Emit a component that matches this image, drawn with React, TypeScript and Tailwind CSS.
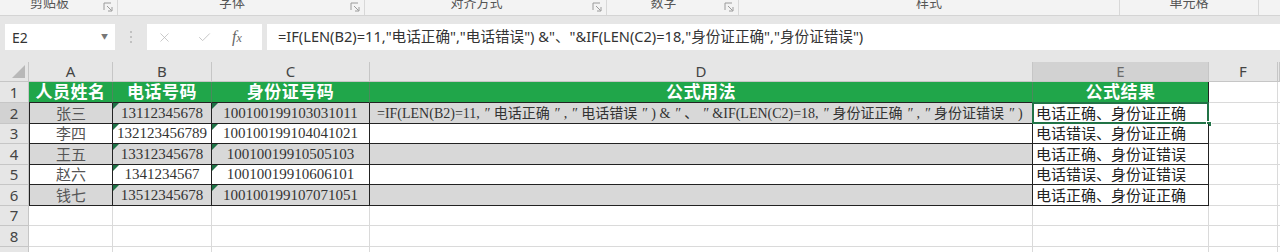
import React from "react";
import { X, Check } from "lucide-react";

const groups = [
  { label: "剪贴板", w: "w-[118px]", launcher: true },
  { label: "字体", w: "w-[247px]", launcher: true },
  { label: "对齐方式", w: "w-[242px]", launcher: true },
  { label: "数字", w: "w-[132px]", launcher: true },
  { label: "样式", w: "w-[381px]", launcher: false },
  { label: "单元格", w: "w-[139px]", launcher: false },
];

const people = [
  ["张三", "13112345678", "100100199103031011", "电话正确、身份证正确"],
  ["李四", "132123456789", "100100199104041021", "电话错误、身份证正确"],
  ["王五", "13312345678", "10010019910505103", "电话正确、身份证错误"],
  ["赵六", "1341234567", "10010019910606101", "电话错误、身份证错误"],
  ["钱七", "13512345678", "100100199107071051", "电话正确、身份证正确"],
];

const rowHeights = ["h-[21px]", "h-[21px]", "h-[20px]", "h-[21px]", "h-[20px]", "h-[21px]", "h-[20px]", "h-[21px]", "h-[21px]"];

const formula =
  '=IF(LEN(B2)=11,"电话正确","电话错误") &"、"&IF(LEN(C2)=18,"身份证正确","身份证错误")';

const Launcher = () => (
  <svg width="10" height="10" viewBox="0 0 10 10" className="shrink-0">
    <path d="M1 8V1h7" fill="none" stroke="#9a9a9a" strokeWidth="1" />
    <path d="M4 4l4.5 4.5M5 9h4V5" fill="none" stroke="#9a9a9a" strokeWidth="1" />
  </svg>
);

// the formula as it is typed into D2: SimSun-like, quotes are full width
const CellFormula = () => (
  <span className="whitespace-nowrap">
    {formula.split('"').map((part, i) => (
      <React.Fragment key={i}>
        {i > 0 && <span className="inline-block w-[14px] text-center italic">″</span>}
        {part}
      </React.Fragment>
    ))}
  </span>
);

const Triangle = () => (
  <span className="absolute left-0 top-0 h-0 w-0 border-r-[6px] border-t-[6px] border-r-transparent border-t-[#1e7145]" />
);

const HeadCell = ({ w, children, selected }: { w: string; children?: React.ReactNode; selected?: boolean }) => (
  <div
    className={
      "flex items-center justify-center border-r border-b border-[#c6c6c6] text-[15px] " +
      w +
      (selected ? " bg-[#d2d2d2] text-[#6a6a6a]" : " text-[#444]")
    }
  >
    {children}
  </div>
);

const RowNum = ({ n, h, selected }: { n: number; h: string; selected?: boolean }) => (
  <div
    className={
      "flex w-[29px] shrink-0 items-center justify-center border-r border-b border-[#c6c6c6] text-[15px] text-[#444] " +
      h +
      (selected ? " bg-[#d2d2d2]" : " bg-[#e6e6e6]")
    }
  >
    {n}
  </div>
);

export default function App() {
  return (
    <div className="h-[252px] w-[1280px] overflow-hidden bg-[#e6e6e6] font-['Noto_Sans','Noto_Sans_CJK_SC',sans-serif]">
      {/* ribbon group labels, cut off at the top */}
      <div className="flex h-[16px] overflow-hidden border-b border-[#d4d4d4] bg-[#f3f3f3] text-[13px] leading-[13px] text-[#555]">
        {groups.map((g) => (
          <div key={g.label} className={"flex shrink-0 items-start border-r border-[#d8d8d8] " + g.w}>
            <div className="-mt-[4px] flex-1 text-center">{g.label}</div>
            {g.launcher && (
              <div className="flex w-[18px] justify-center pt-[2px]">
                <Launcher />
              </div>
            )}
          </div>
        ))}
      </div>

      {/* formula bar */}
      <div className="flex h-[46px] items-start pt-[8px]">
        <div className="ml-[5px] flex h-[26px] w-[110px] items-center justify-between bg-white pl-[7px] pr-[7px] text-[14px] text-[#333]">
          <span>E2</span>
          <span className="text-[7px] text-[#777]">▼</span>
        </div>
        <div className="flex h-[26px] w-[32px] flex-col items-center justify-center gap-[3px]">
          <span className="h-[2px] w-[2px] rounded-full bg-[#b5b5b5]" />
          <span className="h-[2px] w-[2px] rounded-full bg-[#b5b5b5]" />
          <span className="h-[2px] w-[2px] rounded-full bg-[#b5b5b5]" />
        </div>
        <div className="flex h-[26px] w-[115px] items-center bg-white">
          <X size={15} strokeWidth={1.2} color="#b8b8b8" className="ml-[10px]" />
          <Check size={15} strokeWidth={1.5} color="#c2c2c2" className="ml-[25px]" />
          <span className="ml-[20px] font-['Liberation_Serif',serif] text-[16px] italic text-[#666]">
            f<span className="text-[12px]">x</span>
          </span>
        </div>
        <div className="ml-[5px] flex h-[26px] flex-1 items-center whitespace-pre bg-white pl-[11px] text-[14.6px] text-[#333]">
          {formula}
        </div>
      </div>

      {/* sheet */}
      <div className="bg-white">
        <div className="flex h-[20px] bg-[#e6e6e6]">
          <div className="relative w-[29px] border-r border-b border-[#c6c6c6]">
            <span className="absolute bottom-[3px] right-[3px] h-0 w-0 border-b-[13px] border-l-[13px] border-b-[#b8b8b8] border-l-transparent" />
          </div>
          <HeadCell w="w-[84px]">A</HeadCell>
          <HeadCell w="w-[99px]">B</HeadCell>
          <HeadCell w="w-[158px]">C</HeadCell>
          <HeadCell w="w-[663px]">D</HeadCell>
          <HeadCell w="w-[176px]" selected>
            E
          </HeadCell>
          <HeadCell w="w-[69px]">F</HeadCell>
          <HeadCell w="flex-1" />
        </div>

        {/* row 1: green titles */}
        <div className={"flex " + rowHeights[0]}>
          <RowNum n={1} h={rowHeights[0]} />
          <div className="flex flex-1 bg-[#20a64a] text-[17px] font-bold tracking-[0.5px] text-white">
            <div className="flex w-[84px] items-center justify-center border-r border-b border-r-[#4a8a5c] border-b-[#222]">人员姓名</div>
            <div className="flex w-[99px] items-center justify-center border-r border-b border-r-[#4a8a5c] border-b-[#222]">电话号码</div>
            <div className="flex w-[158px] items-center justify-center border-r border-b border-r-[#4a8a5c] border-b-[#222]">身份证号码</div>
            <div className="flex w-[663px] items-center justify-center border-r border-b border-r-[#4a8a5c] border-b-[#222]">公式用法</div>
            <div className="flex w-[176px] items-center justify-center border-r border-b border-[#222]">公式结果</div>
            <div className="w-[69px] border-r border-b border-[#dadada] bg-white" />
            <div className="flex-1 border-b border-[#dadada] bg-white" />
          </div>
        </div>

        {people.map((p, i) => {
          const h = rowHeights[i + 1];
          const fill = i % 2 === 0 ? " bg-[#d8d8d8]" : " bg-white";
          return (
            <div key={p[0]} className={"flex " + h}>
              <RowNum n={i + 2} h={h} selected={i === 0} />
              <div className={"flex w-[84px] items-center justify-center border-l border-r border-b border-[#222] text-[15px] text-[#555]" + fill}>
                {p[0]}
              </div>
              <div className={"relative flex w-[99px] items-center justify-center border-r border-b border-[#222] font-['Liberation_Serif','Noto_Sans_CJK_SC',serif] text-[15px] text-[#333]" + fill}>
                <Triangle />
                {p[1]}
              </div>
              <div className={"relative flex w-[158px] items-center justify-center border-r border-b border-[#222] font-['Liberation_Serif','Noto_Sans_CJK_SC',serif] text-[15px] text-[#333]" + fill}>
                <Triangle />
                {p[2]}
              </div>
              <div className={"flex w-[663px] items-center overflow-hidden border-r border-b border-[#222] pl-[7px] font-['Liberation_Serif','Noto_Sans_CJK_SC',serif] text-[14px] text-[#333]" + fill}>
                {i === 0 && <CellFormula />}
              </div>
              <div className="relative flex w-[176px] items-center border-r border-b border-[#222] bg-white pl-[3px] text-[15px] text-[#222]">
                {p[3]}
                {i === 0 && (
                  <>
                    <span className="absolute -left-[1px] -top-[1px] -right-[1px] -bottom-[1px] border-2 border-[#217346]" />
                    <span className="absolute -bottom-[4px] -right-[4px] h-[6px] w-[6px] border border-white bg-[#217346]" />
                  </>
                )}
              </div>
              <div className="w-[69px] border-r border-b border-[#dadada]" />
              <div className="flex-1 border-b border-[#dadada]" />
            </div>
          );
        })}

        {[7, 8, 9].map((n) => {
          const h = rowHeights[n - 1];
          return (
            <div key={n} className={"flex " + h}>
              <RowNum n={n} h={h} />
              <div className="w-[84px] border-r border-b border-[#dadada]" />
              <div className="w-[99px] border-r border-b border-[#dadada]" />
              <div className="w-[158px] border-r border-b border-[#dadada]" />
              <div className="w-[663px] border-r border-b border-[#dadada]" />
              <div className="w-[176px] border-r border-b border-[#dadada]" />
              <div className="w-[69px] border-r border-b border-[#dadada]" />
              <div className="flex-1 border-b border-[#dadada]" />
            </div>
          );
        })}
      </div>
    </div>
  );
}
